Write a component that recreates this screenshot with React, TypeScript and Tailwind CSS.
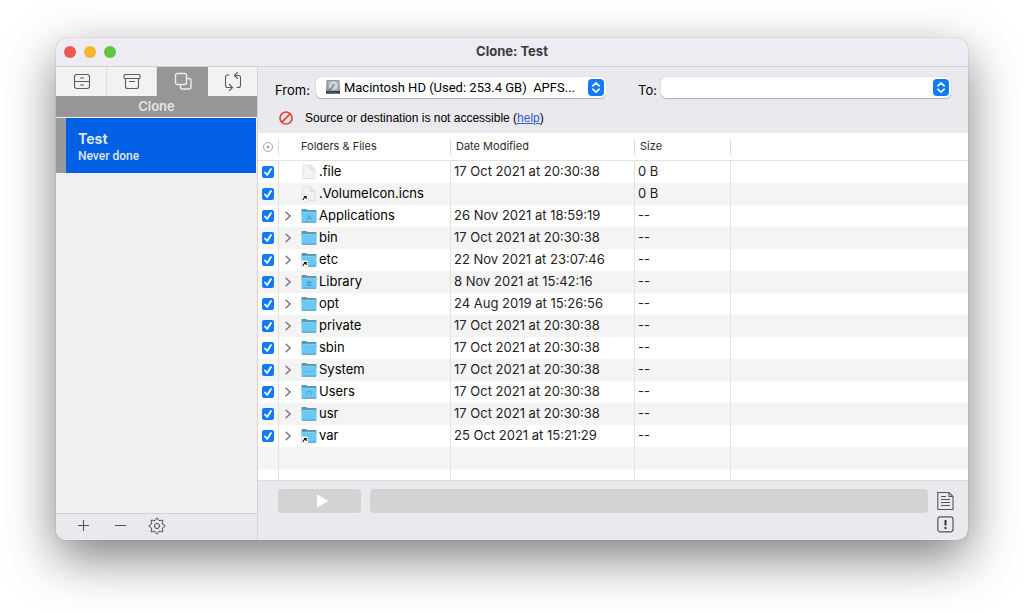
import { useState } from "react";
import type { ReactNode } from "react";
import clsx from "clsx";

type Badge = "apps" | "library" | "system" | "users";

interface Entry {
  name: string;
  date: string;
  size: string;
  kind: "file" | "folder";
  alias?: boolean;
  badge?: Badge;
}

const entries: Entry[] = [
  { name: ".file", date: "17 Oct 2021 at 20:30:38", size: "0 B", kind: "file" },
  { name: ".VolumeIcon.icns", date: "", size: "0 B", kind: "file", alias: true },
  { name: "Applications", date: "26 Nov 2021 at 18:59:19", size: "--", kind: "folder", badge: "apps" },
  { name: "bin", date: "17 Oct 2021 at 20:30:38", size: "--", kind: "folder" },
  { name: "etc", date: "22 Nov 2021 at 23:07:46", size: "--", kind: "folder", alias: true },
  { name: "Library", date: "8 Nov 2021 at 15:42:16", size: "--", kind: "folder", badge: "library" },
  { name: "opt", date: "24 Aug 2019 at 15:26:56", size: "--", kind: "folder" },
  { name: "private", date: "17 Oct 2021 at 20:30:38", size: "--", kind: "folder" },
  { name: "sbin", date: "17 Oct 2021 at 20:30:38", size: "--", kind: "folder" },
  { name: "System", date: "17 Oct 2021 at 20:30:38", size: "--", kind: "folder", badge: "system" },
  { name: "Users", date: "17 Oct 2021 at 20:30:38", size: "--", kind: "folder", badge: "users" },
  { name: "usr", date: "17 Oct 2021 at 20:30:38", size: "--", kind: "folder" },
  { name: "var", date: "25 Oct 2021 at 15:21:29", size: "--", kind: "folder", alias: true },
];

const badgePaths: Record<Badge, string> = {
  apps: "M5.5 11.5 8 7.5l2.5 4M6 10.5h4",
  library: "M5.5 8.5 8 7l2.5 1.5zM6.5 9v2.5M8 9v2.5M9.5 9v2.5M5.5 11.5h5",
  system: "M3.5 9.5H5M6 9.5h1.5M8.5 9.5H10M11 9.5h1.5",
  users: "M6.5 11.5C5 9.5 5.5 7.5 8 7.5s3 2 1.5 4",
};

export default function App() {
  const [mode, setMode] = useState("Clone");

  return (
    <div className="bg-white px-14 pt-[38px] pb-[74px] font-['Inter',sans-serif] text-black">
      <main className="overflow-hidden rounded-[10px] bg-[#eae9ed] shadow-[0_0_1px_rgba(0,0,0,0.5),0_18px_50px_rgba(0,0,0,0.5)]">
        <TitleBar />
        <div className="flex">
          <Sidebar mode={mode} onMode={setMode} />
          <section className="flex min-w-0 flex-1 flex-col">
            <SourceBar />
            <FileTable />
            <RunBar />
          </section>
        </div>
      </main>
    </div>
  );
}

function TitleBar() {
  return (
    <header className="relative flex h-[29px] items-center justify-center border-b border-[#d3d1d6] bg-[#eeebf3]">
      <div className="absolute left-2 flex gap-2">
        <button aria-label="Close" className="size-3 rounded-full bg-[#ee5a50]" />
        <button aria-label="Minimise" className="size-3 rounded-full bg-[#f6b42d]" />
        <button aria-label="Zoom" className="size-3 rounded-full bg-[#5fc73c]" />
      </div>
      <h1 className="text-[13px] font-bold text-[#3b3a3d]">Clone: Test</h1>
    </header>
  );
}

const modes: { name: string; icon: ReactNode }[] = [
  {
    name: "Backup",
    icon: (
      <>
        <rect x="1.5" y="2.5" width="15" height="14" rx="2.5" />
        <path d="M1.5 9.5h15M7.5 6h3M7.5 13h3" />
      </>
    ),
  },
  {
    name: "Archive",
    icon: (
      <>
        <rect x="1" y="2.5" width="16" height="4" rx="1" />
        <path d="M2.5 6.5v8a2 2 0 0 0 2 2h9a2 2 0 0 0 2-2v-8M6.5 9.5h5" />
      </>
    ),
  },
  {
    name: "Clone",
    icon: (
      <>
        <rect x="1.5" y="1.5" width="11" height="11" rx="2" />
        <path d="M12.500 6.500H15a2 2 0 0 1 2 2V15a2 2 0 0 1-2 2H8.500a2 2 0 0 1-2-2v-2.500" />
      </>
    ),
  },
  {
    name: "Sync",
    icon: (
      <>
        <path d="M5 3H3.500a2 2 0 0 0-2 2v8.500a2 2 0 0 0 2 2H8M5.500 12.500l3 3-3 3" />
        <path d="M13 15.500h1.500a2 2 0 0 0 2-2V5.500a2 2 0 0 0-2-2h-4M13.500.500l-3 3 3 3" />
      </>
    ),
  },
];

function Sidebar({ mode, onMode }: { mode: string; onMode: (m: string) => void }) {
  return (
    <aside className="flex w-[202px] shrink-0 flex-col border-r border-[#d3d3d5] bg-[#f0f0f0]">
      <nav className="grid h-[29px] grid-cols-[51px_50px_51px_1fr]">
        {modes.map((m) => (
          <button
            key={m.name}
            aria-label={m.name}
            onClick={() => onMode(m.name)}
            className={clsx(
              "flex items-center justify-center border-r pl-px",
              m.name === mode
                ? "border-[#969696] bg-[#969696] text-[#ececec]"
                : "border-[#dedede] bg-[#f2f2f2] text-[#5c5c5c] last:border-r-0"
            )}
          >
            <svg
              viewBox="0 0 18 19"
              className="h-[19px] w-[18px]"
              fill="none"
              stroke="currentColor"
              strokeWidth={m.name === mode ? 1.4 : 1.1}
              strokeLinecap="round"
              strokeLinejoin="round"
            >
              {m.icon}
            </svg>
          </button>
        ))}
      </nav>
      <h2 className="h-[21px] bg-[#969696] text-center text-[13px] leading-[21px] font-semibold text-[#e4e4e4]">
        {mode}
      </h2>
      <button className="mt-px mr-px flex h-[55px] flex-col justify-center border-l-10 border-[#999999] bg-[#0160e3] pt-0.5 pl-3 text-left">
        <span className="text-sm leading-[18px] font-bold text-[#dfe5f4]">Test</span>
        <span className="font-['Roboto',sans-serif] text-xs leading-4 font-medium text-[#dfe5f4]">Never done</span>
      </button>
      <div className="mt-auto flex h-[27px] items-center gap-[19px] border-t border-[#d3d3d5] bg-[#eae9ed] pb-0.5 pl-[18px] text-[#4f4f52]">
        <button aria-label="Add task">
          <svg viewBox="0 0 18 18" className="size-[18px]" fill="none" stroke="currentColor">
            <path d="M4 8.5h11M9.5 3v11" />
          </svg>
        </button>
        <button aria-label="Remove task">
          <svg viewBox="0 0 18 18" className="size-[18px]" fill="none" stroke="currentColor">
            <path d="M4 8.5h11" />
          </svg>
        </button>
        <button aria-label="Task settings">
          <GearIcon />
        </button>
      </div>
    </aside>
  );
}

// One tooth, repeated every 45 degrees
const teeth = [0, 45, 90, 135, 180, 225, 270, 315];

function GearIcon() {
  return (
    <svg viewBox="0 0 18 18" className="size-[18px]" fill="none" stroke="currentColor" strokeLinecap="round">
      {teeth.map((angle) => (
        <path
          key={angle}
          transform={`rotate(${angle} 9 9)`}
          d="M6.700 3.500Q7.700 3.200 7.900 2.200Q8.100 1 9 1T10.100 2.200Q10.300 3.200 11.300 3.500"
        />
      ))}
      <circle cx="9" cy="9" r="2.6" />
    </svg>
  );
}

function SourceBar() {
  return (
    <div className="h-[66px] px-[17px] pt-2.5">
      <div className="flex items-start text-[13px] leading-5">
        <label htmlFor="from" className="mr-1.5 pt-[3px]">
          From:
        </label>
        <Popup id="from" icon={<DiskIcon />}>
          <option>{"Macintosh HD (Used: 253.4 GB)\u00a0 APFS..."}</option>
        </Popup>
        <label htmlFor="to" className="mr-1 ml-8 pt-[3px]">
          To:
        </label>
        <Popup id="to">
          <option></option>
        </Popup>
      </div>
      <div className="mt-2.5 flex items-center gap-3 pl-1 font-['Liberation_Sans',sans-serif] text-xs">
        <svg viewBox="0 0 14 14" className="size-3.5" fill="none" stroke="#e5422f" strokeWidth="1.7">
          <circle cx="7" cy="7" r="6" />
          <path d="M2.9 11.1l8.2-8.2" />
        </svg>
        <p>
          Source or destination is not accessible (
          <a href="#help" className="text-[#2f5be0] underline">
            help
          </a>
          )
        </p>
      </div>
    </div>
  );
}

function Popup({ id, icon, children }: { id: string; icon?: ReactNode; children: ReactNode }) {
  return (
    <div className="relative min-w-0 flex-1">
      <select
        id={id}
        className={clsx(
          "block h-[21px] w-full appearance-none rounded-[5px] bg-white pr-5 font-['Roboto',sans-serif] text-[13px] shadow-[0_0_1px_rgba(0,0,0,0.3),0_1px_1px_rgba(0,0,0,0.2)]",
          icon ? "pl-7" : "pl-2"
        )}
      >
        {children}
      </select>
      {icon && <span className="pointer-events-none absolute top-0.5 left-2">{icon}</span>}
      <svg viewBox="0 0 16 17" className="pointer-events-none absolute top-0.5 right-0.5 h-[17px] w-4">
        <rect width="16" height="17" rx="4" fill="#127bfb" />
        <path
          d="M4.8 6.8 8 3.8l3.2 3M4.8 10.2l3.2 3 3.2-3"
          fill="none"
          stroke="#fff"
          strokeWidth="1.6"
          strokeLinecap="round"
          strokeLinejoin="round"
        />
      </svg>
    </div>
  );
}

function DiskIcon() {
  return (
    <svg viewBox="0 0 18 16" className="h-4 w-[18px]">
      <path d="M2.5 1h13l.5 11.500H2z" fill="#8b979d" />
      <path d="M4 2h10.500v9.500H3.500z" fill="#a9b4b9" />
      <ellipse cx="9.500" cy="6.500" rx="4.200" ry="4.300" fill="#cfd7da" />
      <path d="M10 5.500 7 10l-3.500 1" fill="none" stroke="#65727a" strokeWidth="1.200" />
      <circle cx="9.500" cy="6" r="1" fill="#7c898f" />
      <path d="M2 12h14v2.800H2z" fill="#383c3e" />
      <path d="M3.500 13.400h9" stroke="#63686a" strokeWidth="0.700" />
    </svg>
  );
}

function FileTable() {
  const [skipped, setSkipped] = useState<string[]>([]);

  const toggle = (name: string) =>
    setSkipped((s) => (s.includes(name) ? s.filter((n) => n !== name) : [...s, name]));

  return (
    <table className="w-full table-fixed border-separate border-spacing-0 bg-white text-left text-[13px]">
      <colgroup>
        <col className="w-[21px]" />
        <col className="w-[172px]" />
        <col className="w-[184px]" />
        <col className="w-24" />
        <col />
      </colgroup>
      <thead>
        <tr className="h-7 text-[11px] text-[#2b2b2b]">
          <HeadCell className="pl-1">
            <svg viewBox="0 0 12 12" className="size-3" fill="none" stroke="#a6a6a6">
              <circle cx="6" cy="6" r="4.5" />
              <circle cx="6" cy="6" r="1.5" fill="#a6a6a6" stroke="none" />
            </svg>
          </HeadCell>
          <HeadCell className="pl-[22px]">Folders &amp; Files</HeadCell>
          <HeadCell className="pl-[5px]">Date Modified</HeadCell>
          <HeadCell className="pl-[5px]">Size</HeadCell>
          <th className="border-b border-[#e2e2e2] p-0" />
        </tr>
      </thead>
      <tbody>
        {entries.map((e) => (
          <tr key={e.name} className="h-[22px] even:bg-[#f4f4f4]">
            <td className="border-r border-[#e2e2e2] p-0">
              <label className="relative ml-1 block size-3">
                <input
                  type="checkbox"
                  aria-label={`Include ${e.name}`}
                  checked={!skipped.includes(e.name)}
                  onChange={() => toggle(e.name)}
                  className="peer block size-3 appearance-none rounded-[2px] border border-[#b5b5b5] bg-white checked:border-[#0f7bfa] checked:bg-[#0f7bfa]"
                />
                <svg
                  viewBox="0 0 12 12"
                  className="pointer-events-none absolute inset-0 hidden size-3 peer-checked:block"
                  fill="none"
                  stroke="#fff"
                  strokeWidth="1.8"
                  strokeLinecap="round"
                  strokeLinejoin="round"
                >
                  <path d="M3 6.5l2.2 2.5L9 3" />
                </svg>
              </label>
            </td>
            <td className="border-r border-[#e2e2e2] p-0">
              <div className="flex h-[22px] items-center">
                <span className="flex w-[22px] pl-[5px]">
                  {e.kind === "folder" && (
                    <button aria-label={`Expand ${e.name}`}>
                      <svg
                        viewBox="0 0 8 10"
                        className="h-2.5 w-2"
                        fill="none"
                        stroke="#6d6d6d"
                        strokeWidth="1.3"
                        strokeLinecap="round"
                        strokeLinejoin="round"
                      >
                        <path d="M2 1.2 6.200 5 2 8.800" />
                      </svg>
                    </button>
                  )}
                </span>
                <EntryIcon entry={e} />
                <span className="ml-0.5">{e.name}</span>
              </div>
            </td>
            <td className="border-r border-[#e2e2e2] py-0 pr-0 pl-[3px] text-[#222222]">{e.date}</td>
            <td className="border-r border-[#e2e2e2] py-0 pr-0 pl-[3px] text-[#222222]">{e.size}</td>
            <td className="p-0" />
          </tr>
        ))}
        <FillerRow className="h-[22px] bg-[#f4f4f4]" />
        <FillerRow className="h-[11px]" />
      </tbody>
    </table>
  );
}

function HeadCell({ className, children }: { className?: string; children: ReactNode }) {
  return (
    <th className="border-b border-[#e2e2e2] p-0 font-normal">
      <div className={clsx("flex h-4 items-center border-r border-[#dcdcdc]", className)}>{children}</div>
    </th>
  );
}

function FillerRow({ className }: { className: string }) {
  return (
    <tr className={className}>
      <td className="border-r border-[#e2e2e2] p-0" />
      <td className="border-r border-[#e2e2e2] p-0" />
      <td className="border-r border-[#e2e2e2] p-0" />
      <td className="border-r border-[#e2e2e2] p-0" />
      <td className="p-0" />
    </tr>
  );
}

function EntryIcon({ entry }: { entry: Entry }) {
  return (
    <svg viewBox="0 0 16 16" className="size-4 shrink-0">
      {entry.kind === "folder" ? (
        <>
          <path d="M.5 2q0-1 1-1h3.800l1.200 1H14.500q1 0 1 1v3H.5z" fill="#5b95b0" />
          <path d="M.5 4h15v9.500q0 1-1 1h-13q-1 0-1-1z" fill="#6bc8f3" />
          <path d="M.5 4.300h15" stroke="#8bd6f8" strokeWidth="0.700" />
          <path d="M.8 14.200h14.400" stroke="#4a90b5" strokeWidth="0.900" />
          {entry.badge && <path d={badgePaths[entry.badge]} fill="none" stroke="#4299c5" strokeWidth="0.8" />}
        </>
      ) : (
        <>
          <path d="M2 1h7.500l4.500 4.500v9H2z" fill="#f3f3f3" stroke="#dcdcdc" strokeWidth="0.8" />
          <path d="M9.500 1v4.500H14" fill="#e9e9e9" stroke="#d3d3d3" strokeWidth="0.8" />
        </>
      )}
      {entry.alias && (
        <>
          <rect x="0.5" y="8.500" width="6.500" height="7" rx="0.8" fill="#fff" stroke="#bbb" strokeWidth="0.4" />
          <path d="M2 14q0-2 2.800-3.300M2.800 10.500h2.400v2.400" fill="none" stroke="#111" strokeWidth="1.1" />
        </>
      )}
    </svg>
  );
}

function RunBar() {
  return (
    <footer className="flex h-[60px] gap-[9px] border-t border-[#dcdcde] pr-3.5 pl-5">
      <button
        aria-label="Run"
        disabled
        className="mt-2 flex h-6 w-[83px] items-center justify-center rounded bg-[#d3d3d3] pl-1.5"
      >
        <svg viewBox="0 0 12 14" className="h-3.5 w-3" fill="#fff">
          <path d="M0 .5 11.5 7 0 13.5z" />
        </svg>
      </button>
      <div role="progressbar" aria-label="Progress" className="mt-2 h-6 flex-1 rounded bg-[#d3d3d3]" />
      <div className="mt-2.5 flex flex-col gap-[5px] text-[#55555a]">
        <button aria-label="Show log">
          <svg viewBox="0 0 17 20" className="h-5 w-[17px]" fill="none" stroke="currentColor" strokeWidth="1.1">
            <path d="M.8 1.5H12l4 4v13H.8zM12 1.5v4h4M4 5.5h5M4 8.5h9M4 11.5h9M4 14.5h9" />
          </svg>
        </button>
        <button aria-label="Show warnings">
          <svg viewBox="0 0 17 17" className="size-[17px]" fill="none" stroke="currentColor" strokeWidth="1.2">
            <rect x="0.8" y="0.8" width="15.2" height="15" rx="2.5" />
            <path d="M8.5 4v5.500M8.500 11v2" stroke="#222" strokeWidth="1.800" />
          </svg>
        </button>
      </div>
    </footer>
  );
}
